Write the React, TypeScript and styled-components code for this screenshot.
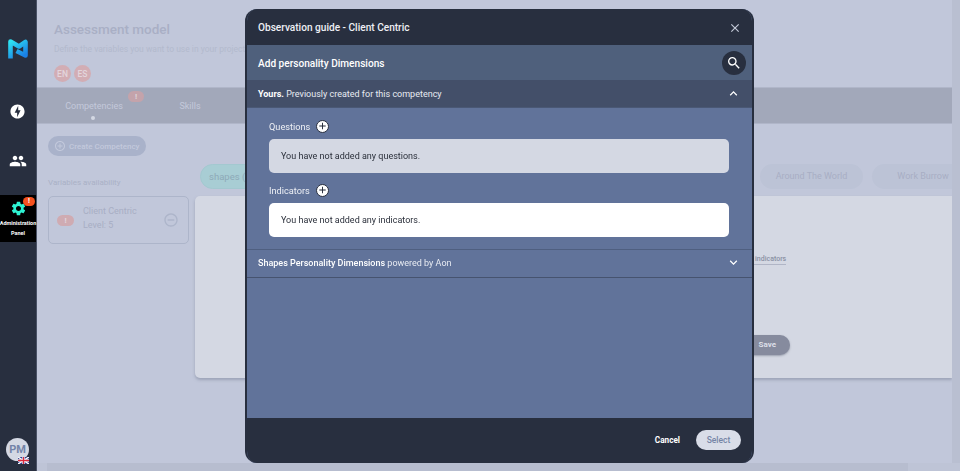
import * as React from 'react';
import styled, { createGlobalStyle } from 'styled-components';
import {
    MdOfflineBolt,
    MdPeople,
    MdSettings,
    MdSearch,
    MdClose,
    MdExpandLess,
    MdExpandMore,
    MdAddCircleOutline,
    MdRemoveCircleOutline,
    MdAdd,
} from 'react-icons/md';

const GlobalStyle = createGlobalStyle`
    html, body {
        margin: 0;
        padding: 0;
        height: 100%;
        overflow: hidden;
        font-family: Roboto, "Liberation Sans", sans-serif;
        background: #c1c7da;
    }
    * { box-sizing: border-box; }
`;

const Page = styled.div`
    display: flex;
    width: 960px;
    height: 471px;
    overflow: hidden;
`;

const Sidebar = styled.nav`
    width: 37px;
    flex-shrink: 0;
    background: #282f3f;
    border-right: 1px solid #4a5266;
    display: flex;
    flex-direction: column;
    align-items: center;
    padding: 38px 1px 0 0;
`;

const SideIcon = styled.div<{ $top: number }>`
    display: flex;
    margin-top: ${props => props.$top}px;
    color: #fff;
`;

const AdminItem = styled.div`
    position: relative;
    align-self: flex-start;
    width: 36px;
    height: 47px;
    margin-top: 25px;
    padding-top: 5px;
    background: #000;
    display: flex;
    flex-direction: column;
    align-items: center;
    color: #2ef2d2;
`;

const AdminLabel = styled.div`
    color: #fff;
    font-size: 5.5px;
    font-weight: 700;
    line-height: 10px;
    text-align: center;
    white-space: nowrap;
    margin-top: 1px;
`;

const AlertDot = styled.span`
    position: absolute;
    top: 2px;
    right: 1px;
    width: 12px;
    height: 9px;
    border-radius: 5px;
    background: #f4511e;
    color: #fff;
    font-size: 7px;
    font-weight: 700;
    line-height: 9px;
    text-align: center;
`;

const Avatar = styled.div`
    position: relative;
    width: 23px;
    height: 23px;
    margin-top: auto;
    margin-bottom: 10px;
    border-radius: 50%;
    background: #d4d8e3;
    color: #7384a8;
    font-size: 11px;
    font-weight: 700;
    display: flex;
    align-items: center;
    justify-content: center;
`;

const Flag = styled.svg`
    position: absolute;
    right: 0;
    bottom: -3px;
`;

const MainColumn = styled.div`
    flex: 1;
    min-width: 0;
    display: flex;
    flex-direction: column;
`;

const MainRow = styled.div`
    flex: 1;
    min-height: 0;
    display: flex;
`;

const Main = styled.main`
    flex: 1;
    min-width: 0;
    overflow: hidden;
`;

const VerticalTrack = styled.div`
    width: 8px;
    flex-shrink: 0;
    background: #b9bfd1;
`;

const HorizontalTrack = styled.div`
    height: 8px;
    flex-shrink: 0;
    padding-left: 10px;
    background: #bec4d6;
`;

const HorizontalThumb = styled.div`
    width: 861px;
    height: 8px;
    background: #b7bdcf;
`;

const Header = styled.header`
    height: 87px;
    padding: 20px 0 0 17px;
`;

const Title = styled.h1`
    margin: 0;
    color: #a9afc5;
    font-size: 13.5px;
    font-weight: 500;
    line-height: 19px;
`;

const Subtitle = styled.p`
    margin: 3px 0 0;
    color: #b3bacd;
    font-size: 8.5px;
    line-height: 14px;
    white-space: nowrap;
`;

const Languages = styled.div`
    display: flex;
    gap: 3px;
    margin-top: 9px;
`;

const LanguageChip = styled.span`
    width: 17px;
    height: 17px;
    border-radius: 50%;
    background: #d2adb4;
    color: #e3d5dc;
    font-size: 8.5px;
    font-weight: 500;
    display: flex;
    align-items: center;
    justify-content: center;
`;

const TabBar = styled.div`
    height: 37px;
    background: #a2a8ba;
    border-top: 1px solid #b0b6c9;
    border-bottom: 1px solid #b0b6c9;
    display: flex;
`;

const Tab = styled.div<{ $width: number }>`
    position: relative;
    width: ${props => props.$width}px;
    padding-top: 12px;
    text-align: center;
    color: #c4c9da;
    font-size: 9px;
    line-height: 12px;
`;

const TabBadge = styled.span`
    position: absolute;
    top: 3px;
    right: 7px;
    width: 16px;
    height: 11px;
    border-radius: 6px;
    background: #c4a3ab;
    color: #dcd3da;
    font-size: 8px;
    line-height: 11px;
    font-weight: 700;
`;

const TabDot = styled.span`
    position: absolute;
    top: 28px;
    left: 50%;
    width: 4px;
    height: 4px;
    margin-left: -3px;
    border-radius: 50%;
    background: #d4d8e3;
`;

const Content = styled.div`
    display: flex;
    gap: 6px;
    padding: 12px 0 0 11px;
`;

const LeftColumn = styled.div`
    width: 141px;
    flex-shrink: 0;
`;

const CreateButton = styled.div`
    width: 98px;
    height: 20px;
    border-radius: 10px;
    background: #a9b2ca;
    color: #c3c9dc;
    font-size: 8px;
    font-weight: 500;
    display: flex;
    align-items: center;
    gap: 3px;
    padding-left: 6px;
    white-space: nowrap;
`;

const AvailabilityLabel = styled.div`
    margin-top: 21px;
    color: #aab1c6;
    font-size: 8px;
    line-height: 12px;
`;

const VariableCard = styled.div`
    height: 48px;
    margin-top: 7px;
    border: 1px solid #adb5ca;
    border-radius: 5px;
    display: flex;
    align-items: center;
    padding: 0 9px 0 8px;
    color: #adb5ca;
`;

const CardBadge = styled.span`
    width: 17px;
    height: 11px;
    border-radius: 6px;
    background: #cfabb2;
    color: #e0d6dd;
    font-size: 8px;
    line-height: 11px;
    font-weight: 700;
    text-align: center;
    flex-shrink: 0;
`;

const CardText = styled.div`
    flex: 1;
    margin: 0 0 4px 9px;
    color: #a8aec4;
    font-size: 9px;
    line-height: 14px;
`;

const RightColumn = styled.div`
    flex: 1;
    min-width: 0;
    padding-top: 28px;
`;

const VariantRow = styled.div`
    display: flex;
    height: 25px;
    padding-left: 5px;
    margin-bottom: 7px;
`;

const TealPill = styled.div`
    width: 90px;
    flex-shrink: 0;
    border-radius: 13px;
    background: #a8cdd4;
    border: 1px solid #a3c8d0;
    color: #8eaab8;
    font-size: 9.5px;
    line-height: 23px;
    padding-left: 8px;
`;

const VariantPill = styled.div<{ $width: number; $gap: number }>`
    width: ${props => props.$width}px;
    flex-shrink: 0;
    margin-left: ${props => props.$gap}px;
    border-radius: 13px;
    background: #bcc3d6;
    color: #a8aec4;
    font-size: 9px;
    line-height: 25px;
    text-align: center;
    white-space: nowrap;
`;

const Panel = styled.section`
    position: relative;
    height: 182px;
    background: #d4d8e3;
    border-radius: 5px 0 0 5px;
    box-shadow: 0 2px 3px rgba(120, 128, 150, 0.5);
`;

const IndicatorsLink = styled.span`
    position: absolute;
    top: 58px;
    left: 551px;
    color: #8a90a3;
    font-size: 7px;
    font-weight: 500;
    line-height: 10px;
    border-bottom: 1px solid #b0b5c6;
    white-space: nowrap;
`;

const SaveButton = styled.span`
    position: absolute;
    top: 139px;
    left: 530px;
    width: 65px;
    height: 20px;
    border-radius: 10px;
    background: #868b9e;
    color: #dcdfe8;
    font-size: 8px;
    font-weight: 700;
    line-height: 20px;
    text-align: right;
    padding-right: 14px;
    box-shadow: 0 1px 2px rgba(100, 105, 125, 0.5);
`;

const Dialog = styled.div`
    position: fixed;
    top: 9px;
    left: 245px;
    width: 509px;
    height: 454px;
    display: flex;
    flex-direction: column;
    border-radius: 12px;
    border: solid #282f3f;
    border-width: 0 2px;
    background: #61739a;
    overflow: hidden;
`;

const DialogHeader = styled.div`
    height: 36px;
    flex-shrink: 0;
    background: #282f3f;
    display: flex;
    align-items: center;
    justify-content: space-between;
    padding: 1px 10px 0 11px;
    color: #eef0f5;
    font-size: 10.1px;
    font-weight: 500;
`;

const CloseButton = styled.span`
    display: flex;
    color: #c4c9d8;
`;

const DialogSubHeader = styled.div`
    height: 35px;
    flex-shrink: 0;
    background: #4f607c;
    display: flex;
    align-items: center;
    justify-content: space-between;
    padding: 1px 6px 0 11px;
    color: #fff;
    font-size: 10.1px;
    font-weight: 500;
`;

const SearchButton = styled.span`
    width: 24px;
    height: 24px;
    border-radius: 50%;
    background: #282f3f;
    color: #fff;
    display: flex;
    align-items: center;
    justify-content: center;
`;

const AccordionRow = styled.div<{ $open?: boolean }>`
    height: 28px;
    flex-shrink: 0;
    display: flex;
    align-items: center;
    justify-content: space-between;
    padding: 0 11px ${props => (props.$open ? '0' : '2px')};
    font-size: 9px;
    color: #e8ebf2;
    background: ${props => (props.$open ? '#434f69' : 'transparent')};
    border-bottom: 1px solid ${props => (props.$open ? '#4a5875' : '#46536f')};
`;

const AccordionTitle = styled.span<{ $strong?: boolean }>`
    font-weight: ${props => (props.$strong ? 700 : 500)};
    color: #fff;
`;

const AccordionIcon = styled.span`
    display: flex;
    color: #fff;
`;

const AccordionBody = styled.div`
    flex-shrink: 0;
    height: 142px;
    padding: 9px 23px 0 22px;
    border-bottom: 1px solid #4f5f80;
`;

const FieldLabel = styled.div`
    display: flex;
    align-items: center;
    gap: 6px;
    height: 18px;
    color: #eef0f5;
    font-size: 9.2px;
`;

const AddButton = styled.span`
    width: 13px;
    height: 13px;
    border-radius: 50%;
    background: #fff;
    border: 1px solid #282f3f;
    color: #1f2533;
    display: flex;
    align-items: center;
    justify-content: center;
`;

const EmptyBox = styled.div<{ $muted?: boolean }>`
    height: 34px;
    margin: 4px 0 8px;
    padding-left: 12px;
    border-radius: 5px;
    background: ${props => (props.$muted ? '#d4d8e3' : '#fff')};
    color: #2a2f3a;
    font-size: 9px;
    display: flex;
    align-items: center;
`;

const DialogFooter = styled.div`
    height: 45px;
    flex-shrink: 0;
    margin-top: auto;
    background: #282f3f;
    display: flex;
    align-items: center;
    justify-content: flex-end;
    gap: 16px;
    padding: 0 11px 1px 0;
`;

const CancelButton = styled.span`
    color: #fff;
    font-size: 8.2px;
    font-weight: 700;
`;

const SelectButton = styled.span`
    width: 45px;
    height: 20px;
    border-radius: 10px;
    background: #d9dde8;
    color: #7585a6;
    font-size: 8.5px;
    font-weight: 500;
    text-align: center;
    line-height: 20px;
`;

const Logo: React.FC = () => (
    <svg width="20" height="22" viewBox="0 0 20 22" fill="none">
        <defs>
            <linearGradient id="logoGrad" x1="0" y1="0" x2="0.6" y2="1">
                <stop offset="0" stopColor="#2ee2f2" />
                <stop offset="1" stopColor="#1a80e6" />
            </linearGradient>
        </defs>
        <path
            d="M2.5 20.5V3.5L11 8.5L17.5 4V17.5L8.5 13"
            stroke="url(#logoGrad)"
            strokeWidth="4.6"
            strokeLinejoin="round"
        />
    </svg>
);

const UkFlag: React.FC = () => (
    <Flag width="11" height="7" viewBox="0 0 11 7">
        <rect width="11" height="7" fill="#2a3f8f" />
        <path d="M0 0L11 7M11 0L0 7" stroke="#fff" strokeWidth="1.4" />
        <path d="M5.5 0V7M0 3.5H11" stroke="#fff" strokeWidth="2.4" />
        <path d="M5.5 0V7M0 3.5H11" stroke="#d8283c" strokeWidth="1.3" />
    </Flag>
);

const App: React.FC = () => (
    <Page>
        <GlobalStyle />
        <Sidebar>
            <Logo />
            <SideIcon $top={43}><MdOfflineBolt size={17} /></SideIcon>
            <SideIcon $top={32}><MdPeople size={18} /></SideIcon>
            <AdminItem>
                <MdSettings size={17} />
                <AlertDot>!</AlertDot>
                <AdminLabel>Administration<br />Panel</AdminLabel>
            </AdminItem>
            <Avatar>PM<UkFlag /></Avatar>
        </Sidebar>
        <MainColumn>
            <MainRow>
                <Main>
                    <Header>
                        <Title>Assessment model</Title>
                        <Subtitle>Define the variables you want to use in your projects and</Subtitle>
                        <Languages>
                            <LanguageChip>EN</LanguageChip>
                            <LanguageChip>ES</LanguageChip>
                        </Languages>
                    </Header>
                    <TabBar>
                        <Tab $width={114}>
                            Competencies
                            <TabBadge>!</TabBadge>
                            <TabDot />
                        </Tab>
                        <Tab $width={78}>Skills</Tab>
                    </TabBar>
                    <Content>
                        <LeftColumn>
                            <CreateButton>
                                <MdAddCircleOutline size={12} />
                                Create Competency
                            </CreateButton>
                            <AvailabilityLabel>Variables availability</AvailabilityLabel>
                            <VariableCard>
                                <CardBadge>!</CardBadge>
                                <CardText>Client Centric<br />Level: 5</CardText>
                                <MdRemoveCircleOutline size={16} />
                            </VariableCard>
                        </LeftColumn>
                        <RightColumn>
                            <VariantRow>
                                <TealPill>shapes (</TealPill>
                                <VariantPill $width={103} $gap={470}>Around The World</VariantPill>
                                <VariantPill $width={102} $gap={9}>Work Burrow</VariantPill>
                            </VariantRow>
                            <Panel>
                                <IndicatorsLink>all indicators</IndicatorsLink>
                                <SaveButton>Save</SaveButton>
                            </Panel>
                        </RightColumn>
                    </Content>
                </Main>
                <VerticalTrack />
            </MainRow>
            <HorizontalTrack><HorizontalThumb /></HorizontalTrack>
        </MainColumn>
        <Dialog>
            <DialogHeader>
                Observation guide - Client Centric
                <CloseButton><MdClose size={14} /></CloseButton>
            </DialogHeader>
            <DialogSubHeader>
                Add personality Dimensions
                <SearchButton><MdSearch size={16} /></SearchButton>
            </DialogSubHeader>
            <AccordionRow $open>
                <span><AccordionTitle $strong>Yours.</AccordionTitle> Previously created for this competency</span>
                <AccordionIcon><MdExpandLess size={15} /></AccordionIcon>
            </AccordionRow>
            <AccordionBody>
                <FieldLabel>
                    Questions
                    <AddButton><MdAdd size={12} /></AddButton>
                </FieldLabel>
                <EmptyBox $muted>You have not added any questions.</EmptyBox>
                <FieldLabel>
                    Indicators
                    <AddButton><MdAdd size={12} /></AddButton>
                </FieldLabel>
                <EmptyBox>You have not added any indicators.</EmptyBox>
            </AccordionBody>
            <AccordionRow>
                <span><AccordionTitle>Shapes Personality Dimensions</AccordionTitle> powered by Aon</span>
                <AccordionIcon><MdExpandMore size={15} /></AccordionIcon>
            </AccordionRow>
            <DialogFooter>
                <CancelButton>Cancel</CancelButton>
                <SelectButton>Select</SelectButton>
            </DialogFooter>
        </Dialog>
    </Page>
);

export default App;
